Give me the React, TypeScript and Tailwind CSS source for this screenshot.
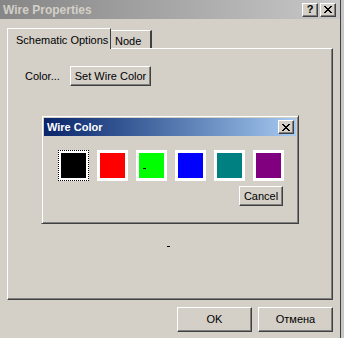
import React from 'react';

// classic 3D bevel used by push buttons
const raised =
  'border border-t-white border-l-white border-r-[#404040] border-b-[#404040] shadow-[inset_-1px_-1px_#808080]';

const swatches = ['#000000', '#ff0000', '#00ff00', '#0000ff', '#008080', '#800080'];

const Button = ({ label, className = '' }: { label: string; className?: string }) => (
  <div className={`flex items-center justify-center bg-[#d4d0c8] text-[11px] text-black ${raised} ${className}`}>
    {label}
  </div>
);

const CaptionButton = ({ children }: { children: React.ReactNode }) => (
  <div className={`flex h-[14px] w-[16px] items-center justify-center bg-[#d4d0c8] ${raised}`}>{children}</div>
);

const CrossIcon = () => (
  <svg width="8" height="7" viewBox="0 0 8 7" shapeRendering="crispEdges">
    <path d="M0 0h2v1h-2zM6 0h2v1h-2zM1 1h2v1h-2zM5 1h2v1h-2zM2 2h4v1h-4zM3 3h2v1h-2zM2 4h4v1h-4zM1 5h2v1h-2zM5 5h2v1h-2zM0 6h2v1h-2zM6 6h2v1h-2z" fill="#000" />
  </svg>
);

const WireColorDialog = () => (
  <div className="absolute left-[41px] top-[115px] flex h-[109px] w-[258px] flex-col border border-t-[#d4d0c8] border-l-[#d4d0c8] border-r-[#404040] border-b-[#404040] bg-[#d4d0c8] p-[2px] shadow-[inset_1px_1px_white,inset_-1px_-1px_#808080]">
    <div className="flex h-[18px] items-center bg-gradient-to-r from-[#0a246a] to-[#a6caf0] pl-[3px] pr-[2px]">
      <span className="text-[11px] font-bold text-white">Wire Color</span>
      <div className="ml-auto">
        <CaptionButton>
          <CrossIcon />
        </CaptionButton>
      </div>
    </div>
    <div className="flex gap-[8px] pl-[14px] pt-[14px]">
      {swatches.map((c, i) => (
        <div
          key={c}
          className={`h-[31px] w-[31px] bg-white ${i === 0 ? 'border border-dotted border-black p-[2px]' : 'p-[3px]'}`}
        >
          <div className="h-full w-full" style={{ backgroundColor: c }}>
            {i === 2 && <div className="ml-[4px] pt-[15px]"><div className="h-[1px] w-[3px] bg-black" /></div>}
          </div>
        </div>
      ))}
    </div>
    <div className="flex justify-end pr-[13px] pt-[5px]">
      <Button label="Cancel" className="h-[20px] w-[44px]" />
    </div>
  </div>
);

export default function App() {
  return (
    <div className="flex h-[338px] w-[344px] bg-[#c8c8c8]" style={{ fontFamily: '"Liberation Sans", Arial, sans-serif' }}>
      <div className="relative flex h-full w-[341px] flex-col border-r border-[#404040] bg-[#d4d0c8]">
        {/* Title bar (inactive) */}
        <div className="flex h-[19px] items-center bg-gradient-to-r from-[#868686] to-[#c8c8c8] pl-[3px] pr-[4px]">
          <span className="text-[12px] font-bold text-[#d4d0c8]">Wire Properties</span>
          <div className="ml-auto flex gap-[2px]">
            <CaptionButton>
              <span className="text-[11px] font-bold leading-none text-black">?</span>
            </CaptionButton>
            <CaptionButton>
              <CrossIcon />
            </CaptionButton>
          </div>
        </div>

        {/* Tabs */}
        <div className="px-[7px] pt-[8px]">
          <div className="flex h-[21px] items-end">
            <div className="relative z-10 -mb-px flex h-[21px] w-[104px] items-start border-l border-t border-r border-l-white border-t-white border-r-[#404040] bg-[#d4d0c8] pl-[8px] pt-[3px] text-[11px] text-black">
              Schematic Options
            </div>
            <div className="flex h-[18px] w-[41px] items-start border-r-2 border-t border-t-white border-r-[#404040] bg-[#d4d0c8] pl-[4px] pt-[2px] text-[11px] text-black">
              Node
            </div>
          </div>
          <div className="flex h-[252px] w-[326px] flex-col border border-t-white border-l-white border-r-[#404040] border-b-[#404040] shadow-[inset_-1px_-1px_#808080]">
            <div className="flex items-center pl-[17px] pt-[17px]">
              <span className="w-[45px] text-[11px] text-black">Color...</span>
              <Button label="Set Wire Color" className="h-[20px] w-[81px]" />
            </div>
            <div className="pl-[159px] pt-[160px]">
              <div className="h-[1px] w-[3px] bg-black" />
            </div>
          </div>
        </div>

        {/* Dialog buttons */}
        <div className="flex justify-end gap-[6px] pr-[7px] pt-[7px]">
          <Button label="OK" className="h-[25px] w-[75px]" />
          <Button label="Отмена" className="h-[25px] w-[75px]" />
        </div>

        <WireColorDialog />
      </div>
    </div>
  );
}
